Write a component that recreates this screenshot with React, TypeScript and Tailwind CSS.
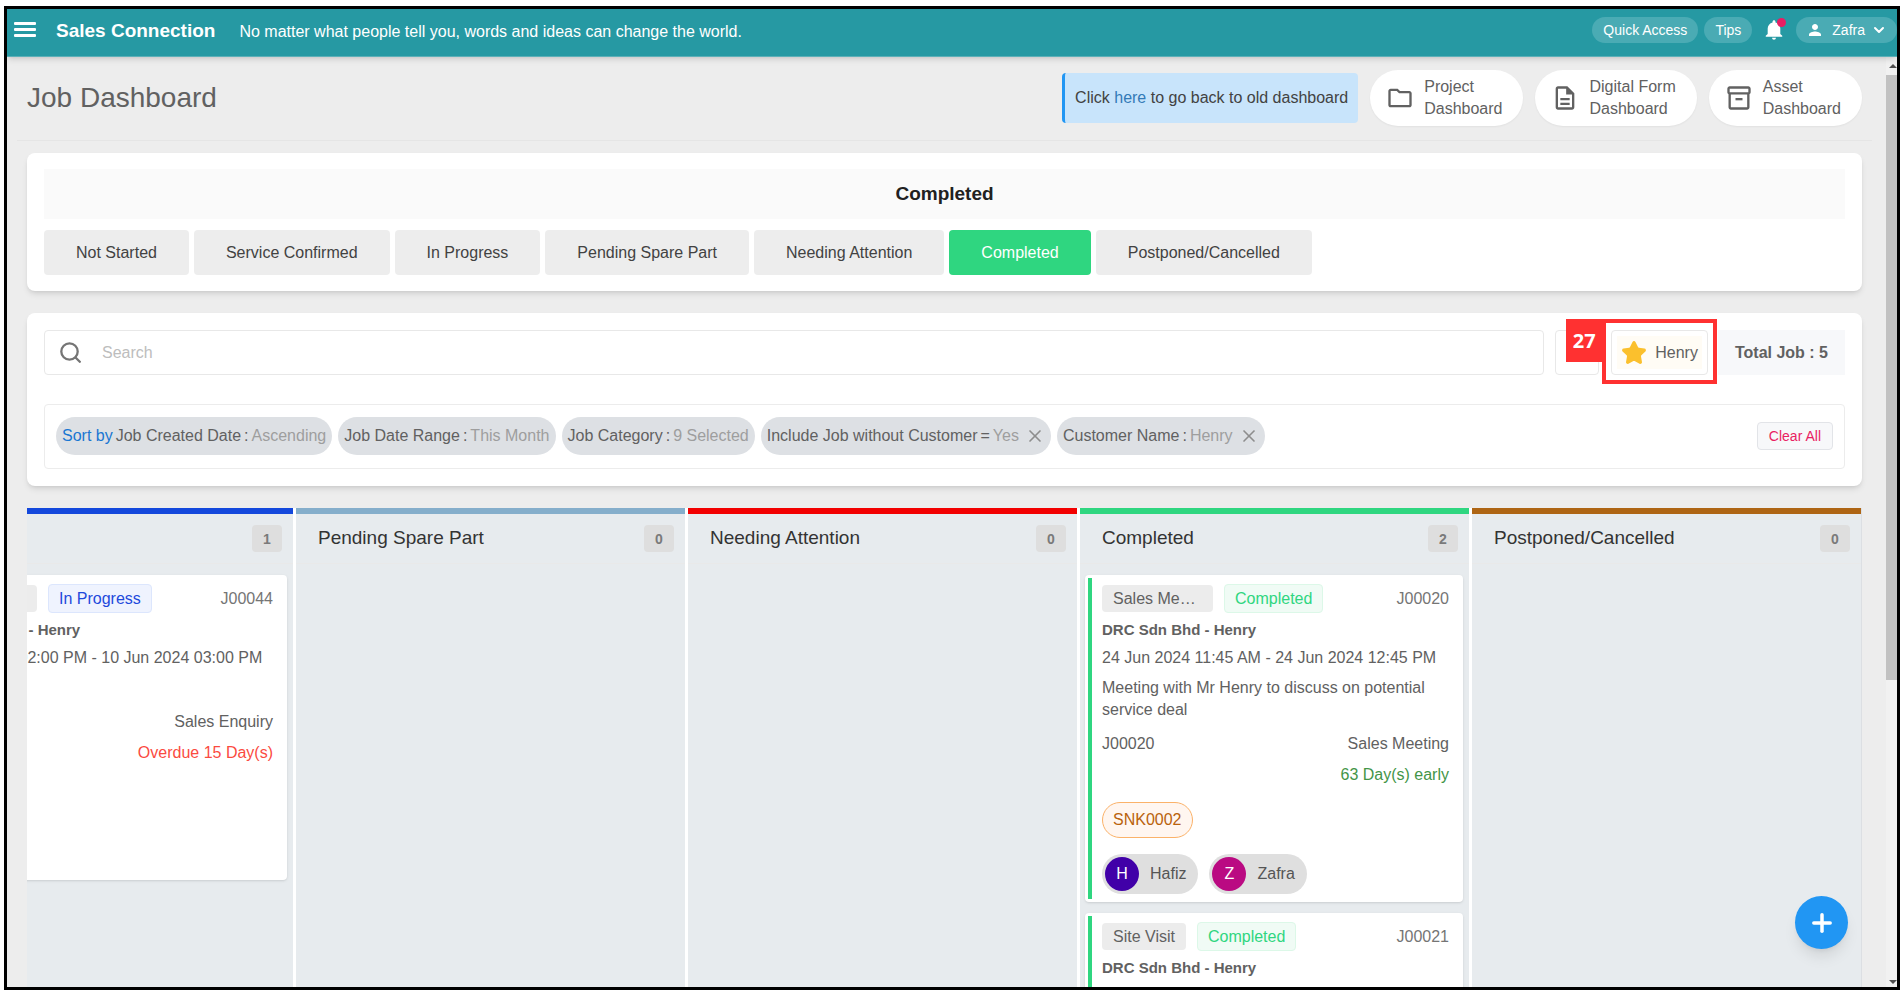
import type { ReactNode } from "react"
import { ChevronDown, Plus, Star, X } from "lucide-react"
import { IoMdNotifications } from "react-icons/io"
import { MdOutlineDescription, MdOutlineFolder, MdOutlineInventory2, MdPerson } from "react-icons/md"

const statuses = [
  "Not Started",
  "Service Confirmed",
  "In Progress",
  "Pending Spare Part",
  "Needing Attention",
  "Completed",
  "Postponed/Cancelled"
]

const filters = [
  { prefix: "Sort by", label: "Job Created Date", sign: ":", value: "Ascending" },
  { label: "Job Date Range", sign: ":", value: "This Month" },
  { label: "Job Category", sign: ":", value: "9 Selected" },
  { label: "Include Job without Customer", sign: "=", value: "Yes", removable: true },
  { label: "Customer Name", sign: ":", value: "Henry", removable: true }
]

type Job = {
  type: string
  status: string
  code: string
  customer: string
  date: string
  description?: string
  reference?: string
  category: string
  due: string
  dueClass: string
  tagClass: string
  barClass: string
  asset: string
  people: { name: string; color: string }[]
}

const hafiz = { name: "Hafiz", color: "bg-[#4100a8]" }
const zafra = { name: "Zafra", color: "bg-[#ba0a82]" }

const inProgressJobs: Job[] = [
  {
    type: "Sales Enquiry",
    status: "In Progress",
    code: "J00044",
    customer: "DRC Sdn Bhd - Henry",
    date: "10 Jun 2024 02:00 PM - 10 Jun 2024 03:00 PM",
    category: "Sales Enquiry",
    due: "Overdue 15 Day(s)",
    dueClass: "text-[#fb4b3f]",
    tagClass: "border-[#dce6fd] bg-[#eff3fe] text-[#1d49dc]",
    barClass: "border-[#1448dc]",
    asset: "SNK0002",
    people: [hafiz]
  }
]

const completedJobs: Job[] = [
  {
    type: "Sales Meeting",
    status: "Completed",
    code: "J00020",
    customer: "DRC Sdn Bhd - Henry",
    date: "24 Jun 2024 11:45 AM - 24 Jun 2024 12:45 PM",
    description: "Meeting with Mr Henry to discuss on potential service deal",
    reference: "J00020",
    category: "Sales Meeting",
    due: "63 Day(s) early",
    dueClass: "text-[#439547]",
    tagClass: "border-[#dcf8e8] bg-[#f0fbf5] text-[#2fd680]",
    barClass: "border-[#2fd680]",
    asset: "SNK0002",
    people: [hafiz, zafra]
  },
  {
    type: "Site Visit",
    status: "Completed",
    code: "J00021",
    customer: "DRC Sdn Bhd - Henry",
    date: "25 Jun 2024 11:00 AM - 25 Jun 2024 12:00 PM",
    category: "Site Visit",
    due: "62 Day(s) early",
    dueClass: "text-[#439547]",
    tagClass: "border-[#dcf8e8] bg-[#f0fbf5] text-[#2fd680]",
    barClass: "border-[#2fd680]",
    asset: "SNK0002",
    people: [hafiz]
  }
]

const columns: { title: string; bar: string; count: number; jobs: Job[] }[] = [
  { title: "In Progress", bar: "border-[#1448dc]", count: 1, jobs: inProgressJobs },
  { title: "Pending Spare Part", bar: "border-[#85aecb]", count: 0, jobs: [] },
  { title: "Needing Attention", bar: "border-[#f20000]", count: 0, jobs: [] },
  { title: "Completed", bar: "border-[#2fd680]", count: 2, jobs: completedJobs },
  { title: "Postponed/Cancelled", bar: "border-[#ae6514]", count: 0, jobs: [] }
]

const Header = () => (
  <header className="relative z-10 flex h-12 shrink-0 items-center border-b border-[#5bb0b8] bg-[#2699a3] pb-0.5 pl-[7px] text-white shadow-md">
    <button aria-label="Menu" className="mb-1 mr-5">
      <svg viewBox="0 0 22 16" className="h-4 w-[22px]" fill="currentColor">
        <rect y="0" width="22" height="3" rx="1" />
        <rect y="6" width="22" height="3" rx="1" />
        <rect y="12" width="22" height="3" rx="1" />
      </svg>
    </button>
    <div className="text-[19px] font-bold">Sales Connection</div>
    <div className="ml-6">
      No matter what people tell you, words and ideas can change the world.
    </div>
    <div className="mb-1 ml-auto flex items-center text-sm">
      <button className="h-[26px] rounded-full bg-[#4aabb4] px-[11px]">Quick Access</button>
      <button className="ml-1.5 h-[26px] rounded-full bg-[#4aabb4] px-[11px]">Tips</button>
      <button aria-label="Notifications" className="relative ml-2.5">
        <IoMdNotifications className="size-6" />
        <span className="absolute right-0 top-0 size-[9px] rounded-full bg-[#e91e63]" />
      </button>
      <button className="ml-2.5 flex h-[26px] items-center rounded-full bg-[#4aabb4] px-2.5">
        <MdPerson className="mr-2 size-[18px]" />
        Zafra
        <ChevronDown className="ml-1.5 size-4" strokeWidth={3} />
      </button>
    </div>
  </header>
)

const DashboardLink = ({ icon, name }: { icon: ReactNode; name: string }) => (
  <a
    href="#"
    className="flex h-14 items-center gap-2.5 rounded-full bg-white pl-4 pr-[21px] leading-[22px] text-[#616161] shadow-xs">
    {icon}
    <span>
      {name}
      <br />
      Dashboard
    </span>
  </a>
)

const JobCard = ({ job }: { job: Job }) => (
  <article className="rounded bg-white p-[3px] leading-[22px] text-[#616161] shadow">
    <div className={`flex flex-col border-l-4 pb-[5px] pl-2.5 pr-[11px] pt-1.5 ${job.barClass}`}>
      <div className="flex items-center">
        <span className="mr-[11px] max-w-[111px] truncate rounded bg-[#ececec] px-[11px] py-[3px] leading-[21px]">
          {job.type}
        </span>
        <span className={`rounded-sm border px-2.5 py-[3px] leading-[21px] ${job.tagClass}`}>
          {job.status}
        </span>
        <span className="ml-auto text-[#757575]">{job.code}</span>
      </div>
      <h3 className="mt-1.5 text-[15px] font-bold leading-[22px]">{job.customer}</h3>
      <p className="mt-1.5 whitespace-nowrap">{job.date}</p>
      <p className="mt-2 min-h-[22px]">{job.description}</p>
      <div className="mt-3 flex justify-between">
        <span>{job.reference}</span>
        <span>{job.category}</span>
      </div>
      <div className={`mt-[9px] text-right ${job.dueClass}`}>{job.due}</div>
      <div className="mt-4 flex">
        <span className="rounded-full border border-[#fbb269] bg-[#fff6f0] px-2.5 py-1.5 text-[#b9620c]">
          {job.asset}
        </span>
      </div>
      <div className="mt-4 flex gap-[11px]">
        {job.people.map((person) => (
          <span
            key={person.name}
            className="flex h-10 items-center rounded-full bg-[#dfdfdf] pl-[3px] pr-3 text-[#555555]">
            <span
              className={`mr-[11px] flex size-[34px] items-center justify-center rounded-full text-white ${person.color}`}>
              {person.name[0]}
            </span>
            {person.name}
          </span>
        ))}
      </div>
    </div>
  </article>
)

const StatusPanel = () => (
  <section className="mt-3 rounded-lg bg-white px-[17px] py-4 shadow-md">
    <h2 className="bg-[#fafafa] py-3 text-center text-[19px] font-bold leading-[26px] text-[#212121]">
      Completed
    </h2>
    <div className="mt-[11px] flex gap-[5px] text-[#424242]">
      {statuses.map((status) => (
        <button
          key={status}
          className={`h-[45px] rounded px-8 ${
            status === "Completed" ? "bg-[#2fd680] text-white" : "bg-[#ededed]"
          }`}>
          {status}
        </button>
      ))}
    </div>
  </section>
)

const FilterPanel = () => (
  <section className="mt-[22px] rounded-lg bg-white p-[17px] text-[#616161] shadow-md">
    <div className="flex h-[45px] items-stretch">
      <label className="flex flex-1 items-center rounded border border-[#e8e8e8] pl-[15px]">
        <svg
          viewBox="0 0 21 21"
          className="size-[21px] shrink-0"
          fill="none"
          stroke="#757575"
          strokeWidth="2.3"
          strokeLinecap="round">
          <circle cx="9.5" cy="9.5" r="8.2" />
          <path d="M15.5 15.5 L19.8 19.8" />
        </svg>
        <input
          aria-label="Search"
          placeholder="Search"
          className="ml-[21px] w-full outline-none placeholder:text-[#bdbdbd]"
        />
      </label>
      <button
        aria-label="Saved filters"
        className="ml-[11px] w-11 rounded border border-[#e8e8e8]"
      />
      <div className="relative ml-3">
        <button className="flex h-full items-center rounded border border-[#e8e8e8] p-[5px]">
          <span className="flex h-full items-center bg-[#fffcf5] px-1">
            <Star className="mr-2 size-[26px] fill-[#fbc02d] text-[#fbc02d]" />
            Henry
          </span>
        </button>
        {/* Step marker */}
        <div className="pointer-events-none absolute -inset-x-[9px] -bottom-[9px] -top-[11px] border-4 border-[#ff3131]">
          <span className="absolute -left-10 -top-1 flex h-[43px] w-9 items-center justify-center bg-[#ff3131] font-['Open_Sans',sans-serif] text-xl font-bold text-white">
            27
          </span>
        </div>
      </div>
      <div className="ml-2.5 flex items-center bg-[#f7f8fa] px-[17px] font-bold">Total Job : 5</div>
    </div>

    <div className="mt-[29px] flex h-[65px] items-center rounded border border-[#ececec] px-[11px] pb-0.5">
      <div className="flex gap-1.5">
        {filters.map((filter) => (
          <span
            key={filter.label}
            className="flex h-[38px] items-center gap-[3px] rounded-full bg-[#dde0e4] px-1.5">
            {filter.prefix && <span className="text-[#1976d2]">{filter.prefix}</span>}
            <span>{filter.label}</span>
            <span>{filter.sign}</span>
            <span className="text-[#9e9e9e]">{filter.value}</span>
            {filter.removable && (
              <button aria-label={`Remove ${filter.label}`} className="ml-[3px]">
                <X className="size-5 text-[#8d8d8d]" />
              </button>
            )}
          </span>
        ))}
      </div>
      <button className="ml-auto h-7 rounded border border-[#e2e4e8] bg-[#f7f8fa] px-[11px] text-sm text-[#e91e63]">
        Clear All
      </button>
    </div>
  </section>
)

const Board = () => (
  <section className="mt-[22px] flex min-h-0 flex-1 justify-end overflow-hidden">
    <div className="flex gap-[3px] border-r border-[#dcdfe3] bg-white">
      {columns.map((column) => (
        <div key={column.title} className="w-[389px] shrink-0 bg-[#e7ebee]">
          <div
            className={`flex h-[55px] items-center justify-between border-t-[6px] pl-[22px] pr-[11px] ${column.bar}`}>
            <h2 className="text-[19px] text-[#333333]">{column.title}</h2>
            <span className="flex h-[27px] w-[30px] items-center justify-center rounded bg-[#dedede] text-sm font-bold text-[#7a7a7a]">
              {column.count}
            </span>
          </div>
          <div className="flex flex-col gap-[11px] border-t border-[#e9e9e9] pl-[5px] pr-1.5 pt-[11px]">
            {column.jobs.map((job) => (
              <JobCard key={job.code} job={job} />
            ))}
          </div>
        </div>
      ))}
    </div>
  </section>
)

const Scrollbar = () => (
  <div className="flex w-[11px] shrink-0 flex-col items-center bg-[#f1f1f1]">
    <svg viewBox="0 0 11 18" className="h-[18px] w-[11px]" fill="#505050">
      <path d="M3 11 L7 7 L11 11 Z" />
    </svg>
    <div className="h-[65%] w-full bg-[#c1c1c1]" />
    <svg viewBox="0 0 11 10" className="mt-auto h-2.5 w-[11px]" fill="#505050">
      <path d="M3 3 L11 3 L7 7 Z" />
    </svg>
  </div>
)

export default function App() {
  return (
    <div className="h-screen bg-white pb-[7px] pl-1 pr-[3px] pt-1.5 font-['Liberation_Sans',Arial,sans-serif] text-base">
      <div className="relative flex h-full flex-col overflow-hidden border-[3px] border-black bg-[#ededed]">
        <Header />
        <div className="flex min-h-0 flex-1">
          <main className="flex min-w-0 flex-1 flex-col pl-5 pr-6">
            <div className="-mx-2.5 flex h-[84px] items-center border-b border-[#e5e5e5] px-2.5 pb-0.5">
              <h1 className="text-[28px] text-[#616161]">Job Dashboard</h1>
              <div className="ml-auto flex items-center gap-3">
                <p className="rounded border-l-[3px] border-[#2196f3] bg-[#c8e4fb] px-2.5 py-3.5 leading-[22px] text-[#424242]">
                  Click{" "}
                  <a href="#" className="text-[#337ab7]">
                    here
                  </a>{" "}
                  to go back to old dashboard
                </p>
                <DashboardLink icon={<MdOutlineFolder className="size-7" />} name="Project" />
                <DashboardLink icon={<MdOutlineDescription className="size-7" />} name="Digital Form" />
                <DashboardLink icon={<MdOutlineInventory2 className="size-7" />} name="Asset" />
              </div>
            </div>
            <StatusPanel />
            <FilterPanel />
            <Board />
          </main>
          <Scrollbar />
        </div>
        <button
          aria-label="Add job"
          className="absolute bottom-[38px] right-[49px] flex size-[53px] items-center justify-center rounded-full bg-[#2196f3] text-white shadow-lg">
          <Plus className="size-7" strokeWidth={3} />
        </button>
      </div>
    </div>
  )
}
